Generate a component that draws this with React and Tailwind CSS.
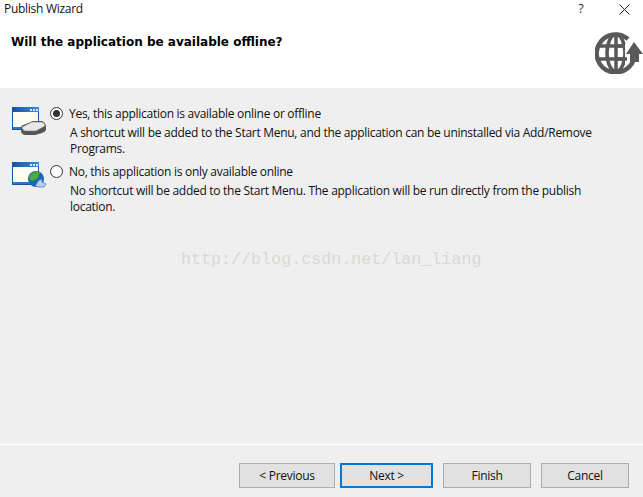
const sans = "font-['Open_Sans','Noto_Sans',sans-serif]";

function WindowIcon({ children }) {
  return (
    <svg width="36" height="30" viewBox="0 0 36 30" className="block shrink-0">
      <defs>
        <linearGradient id="wbar" x1="0" y1="0" x2="1" y2="0">
          <stop offset="0" stopColor="#14549f" />
          <stop offset="1" stopColor="#3f8ad6" />
        </linearGradient>
      </defs>
      <rect x="0" y="0" width="27" height="23" fill="#17569c" />
      <rect x="0" y="0" width="27" height="5" fill="url(#wbar)" />
      <rect x="1" y="5" width="25" height="15" fill="#fffef2" />
      <rect x="1" y="20" width="25" height="2" fill="#2a78c8" />
      <rect x="18" y="2" width="2" height="2" fill="#d6e6f8" />
      <rect x="21" y="2" width="2" height="2" fill="#d6e6f8" />
      <rect x="24" y="2" width="2" height="2" fill="#d6e6f8" />
      {children}
    </svg>
  );
}

function Radio({ checked }) {
  return (
    <span className="mt-[2px] flex h-[13px] w-[13px] shrink-0 items-center justify-center rounded-full border border-[#333] bg-white">
      {checked && <span className="h-[7px] w-[7px] rounded-full bg-[#333]" />}
    </span>
  );
}

function Option({ icon, iconPad, checked, title, children }) {
  return (
    <div className="flex items-start">
      <div className={`w-[38px] shrink-0 ${iconPad}`}>{icon}</div>
      <Radio checked={checked} />
      <div className="ml-[6px] w-[530px] text-[12px] leading-[16px] tracking-[-0.28px] text-[#111]">
        <div className="leading-[18px]">{title}</div>
        <div className="mt-[2px] ml-[1px]">{children}</div>
      </div>
    </div>
  );
}

function Btn({ children, w, primary }) {
  return (
    <div
      className={`flex h-[25px] items-center justify-center bg-[#e1e1e1] text-[12px] tracking-[-0.28px] text-[#111] ${w} ${
        primary ? "border-2 border-[#0078d7]" : "border border-[#adadad]"
      }`}
    >
      {children}
    </div>
  );
}

export default function App() {
  return (
    <div className={`relative flex h-[497px] w-[643px] flex-col overflow-hidden bg-[#efefef] ${sans}`}>
      <header className="h-[88px] shrink-0 bg-white">
        <div className="flex h-[32px] items-start justify-between">
          <span className="ml-[4px] mt-[1px] text-[12px] leading-[16px] tracking-[-0.28px] text-[#111]">Publish Wizard</span>
          <div className="flex items-center">
            <span className="mt-[1px] mr-[2px] w-[46px] text-center text-[12px] leading-[16px] text-[#222]">?</span>
            <span className="mx-[13px] mt-[2px]">
              <svg width="11" height="11" viewBox="0 0 11 11" className="block">
                <path d="M0.5 0.5 L10.5 10.5 M10.5 0.5 L0.5 10.5" stroke="#222" strokeWidth="1" />
              </svg>
            </span>
          </div>
        </div>
        <div className="flex items-start justify-between">
          <h1 className="ml-[11px] mt-[3px] font-['DejaVu_Sans',sans-serif] text-[12px] font-bold leading-[15px] text-black">
            Will the application be available offline?
          </h1>
          <svg width="48" height="42" viewBox="0 0 48 42" className="block">
            <g fill="none" stroke="#595959">
              <ellipse cx="21" cy="21" rx="9" ry="18.5" strokeWidth="3.5" />
              <path d="M3 14 H36 M3 27 H36" strokeWidth="3.5" />
              <path d="M21 2 V40" strokeWidth="3.5" />
            </g>
            <path d="M30 12 L44 12 L44 34 L30 34 Z" fill="#fff" />
            <g fill="none" stroke="#595959" strokeWidth="3.5">
              <path d="M21 14 H30 M21 27 H32" />
              <path d="M33 7 A19 19 0 1 0 39.5 24" strokeWidth="4.5" />
            </g>
            <path d="M31 22 L39 10 L48 22 H44 V30 H35 V22 Z" fill="#595959" />
          </svg>
        </div>
      </header>

      <main className="flex h-[356px] shrink-0 flex-col gap-[6px] pl-[12px] pt-[17px]">
        <Option
          checked
          iconPad="pt-[2px]"
          title="Yes, this application is available online or offline"
          icon={
            <WindowIcon>
              <path d="M9 20 Q9 19 11 18 L19 15 Q20 14 22 14 H30 Q33 15 34 19 V23 Q33 25 30 26 L23 28 H13 Q9 27 9 24 Z" fill="#555" />
              <path d="M10 20 L20 15 H30 Q33 16 33 19 L24 24 H13 Q10 23 10 20 Z" fill="#e8e8e8" stroke="#777" strokeWidth="0.6" />
            </WindowIcon>
          }
        >
          A shortcut will be added to the Start Menu, and the application can be uninstalled via Add/Remove Programs.
        </Option>
        <Option
          iconPad="mt-[-1px]"
          title="No, this application is only available online"
          icon={
            <WindowIcon>
              <circle cx="24" cy="17" r="8" fill="#1a68b4" />
              <path d="M17 14 Q22 8 28 10 L26 16 L21 19 L18 18 Z" fill="#4fa83d" />
              <path d="M27 18 L30 17 L30 20 L34 22 L32 25 L27 25 L23 24 Z" fill="#b4d2f0" stroke="#3a70aa" strokeWidth="0.7" />
            </WindowIcon>
          }
        >
          No shortcut will be added to the Start Menu. The application will be run directly from the publish location.
        </Option>
      </main>

      <div className="h-px shrink-0 bg-white" />

      <footer className="flex flex-1 items-start pl-[239px] pt-[18px]">
        <Btn w="w-[96px]">&lt; Previous</Btn>
        <div className="ml-[5px]"><Btn w="w-[93px]" primary>Next &gt;</Btn></div>
        <div className="ml-[10px]"><Btn w="w-[88px]">Finish</Btn></div>
        <div className="ml-[10px]"><Btn w="w-[88px]">Cancel</Btn></div>
      </footer>

      <div className="absolute left-[181px] top-[249px] font-['Liberation_Mono',monospace] text-[16.7px] leading-[22px] text-[#d9d9d4]">
        http://blog.csdn.net/lan_liang
      </div>
    </div>
  );
}
